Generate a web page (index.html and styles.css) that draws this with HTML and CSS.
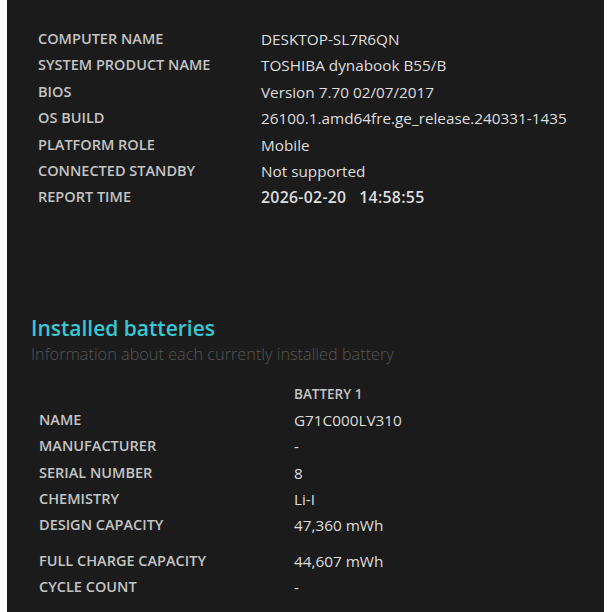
FILE: index.html
```html
<!DOCTYPE html>
<html>
<head>
<meta charset="utf-8">
<link rel="stylesheet" href="styles.css">
</head>
<body>
<div class="panel">
  <div class="info">
    <div class="lbl">COMPUTER NAME</div><div class="val">DESKTOP-SL7R6QN</div>
    <div class="lbl">SYSTEM PRODUCT NAME</div><div class="val">TOSHIBA dynabook B55/B</div>
    <div class="lbl">BIOS</div><div class="val">Version 7.70 02/07/2017</div>
    <div class="lbl">OS BUILD</div><div class="val">26100.1.amd64fre.ge_release.240331-1435</div>
    <div class="lbl">PLATFORM ROLE</div><div class="val">Mobile</div>
    <div class="lbl">CONNECTED STANDBY</div><div class="val">Not supported</div>
    <div class="lbl">REPORT TIME</div><div class="val bold">2026-02-20&nbsp;&nbsp;14:58:55</div>
  </div>
  <h2 class="title">Installed batteries</h2>
  <div class="subtitle">Information about each currently installed battery</div>
  <div class="battery">
    <div class="lbl"></div><div class="head">BATTERY 1</div>
    <div class="lbl">NAME</div><div class="val">G71C000LV310</div>
    <div class="lbl">MANUFACTURER</div><div class="val">-</div>
    <div class="lbl">SERIAL NUMBER</div><div class="val">8</div>
    <div class="lbl">CHEMISTRY</div><div class="val">Li-I</div>
    <div class="lbl">DESIGN CAPACITY</div><div class="val">47,360 mWh</div>
    <div class="lbl gap">FULL CHARGE CAPACITY</div><div class="val gap">44,607 mWh</div>
    <div class="lbl">CYCLE COUNT</div><div class="val">-</div>
  </div>
</div>
</body>
</html>
```
FILE: styles.css
```css
html, body {
  margin: 0;
  padding: 0;
  background: #ffffff;
}
body {
  width: 612px;
  height: 612px;
  overflow: hidden;
}
.panel {
  margin-left: 7px;
  width: 597px;
  height: 612px;
  background: #1b1b1b;
  box-sizing: border-box;
  padding: 26px 0 0 24px;
  font-family: "Open Sans", "Noto Sans", sans-serif;
  color: #dcdcdc;
}
.info {
  display: grid;
  grid-template-columns: 223px auto;
  margin-left: 7px;
  line-height: 26.4px;
  font-size: 15.3px;
}
.lbl {
  font-weight: 600;
  color: #c4c4c4;
  font-size: 14.5px;
}
.val {
  color: #dedede;
}
.bold {
  font-weight: 600;
  font-size: 15.8px;
  letter-spacing: 0.3px;
  word-spacing: 2px;
}
.title {
  margin: 103px 0 0 0;
  font-size: 21px;
  font-weight: 600;
  color: #35c9d3;
  line-height: 28px;
}
.subtitle {
  font-size: 16.3px;
  font-weight: 300;
  color: #565656;
  line-height: 24px;
}
.battery {
  display: grid;
  grid-template-columns: 255px auto;
  margin: 15px 0 0 8px;
  line-height: 26.3px;
  font-size: 15.3px;
}
.head {
  font-weight: 600;
  color: #c4c4c4;
  font-size: 13.5px;
}
.gap {
  margin-top: 9px;
}
```
